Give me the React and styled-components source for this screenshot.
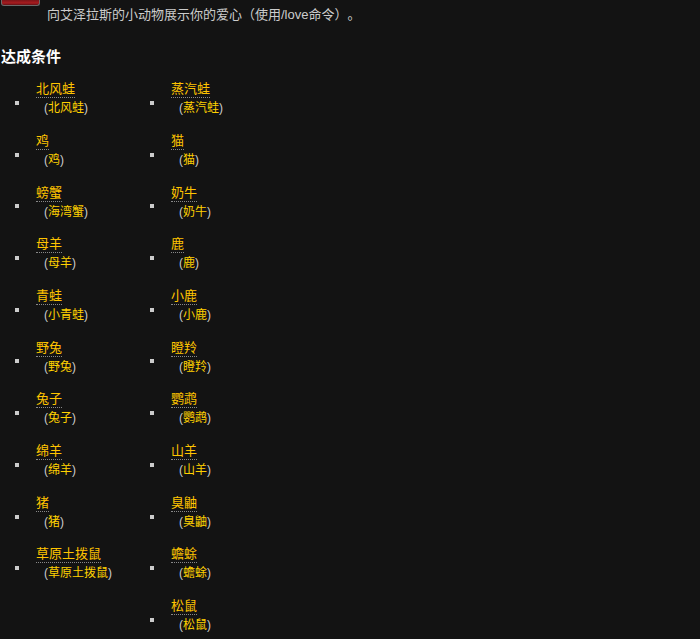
import React from 'react';
import styled, { createGlobalStyle } from 'styled-components';

const GlobalStyle = createGlobalStyle`
  html, body {
    margin: 0;
    padding: 0;
    background-color: #131313;
    overflow: hidden;
  }
  body {
    font-family: "Liberation Sans", "Noto Sans CJK SC", sans-serif;
    font-size: 13px;
    color: #ccc;
  }
`;

const Page = styled.div`
  width: 700px;
  height: 639px;
  overflow: hidden;
`;

const TopIcon = styled.div`
  width: 39px;
  height: 6px;
  margin-left: 1px;
  box-sizing: border-box;
  background: linear-gradient(#7c1418, #a81c20 60%, #5e1014);
  border: 1px solid #6a6a6a;
  border-top: none;
  border-radius: 0 0 3px 3px;
`;

const Description = styled.p`
  margin: 0;
  padding: 1px 0 0 47px;
  line-height: 16px;
  text-spacing-trim: space-all;
`;

const Heading = styled.h3`
  margin: 0;
  padding: 24px 0 0 1px;
  font-size: 15px;
  line-height: 20px;
  font-weight: bold;
  color: #fff;
`;

const Columns = styled.div`
  display: flex;
  padding-top: 14px;
`;

const Column = styled.ul`
  list-style: none;
  margin: 0;
  padding: 0;
  width: 135px;
`;

const Item = styled.li`
  position: relative;
  height: 51.7px;
  padding-left: 36px;

  &::before {
    content: '';
    position: absolute;
    left: 15px;
    top: 20px;
    width: 4px;
    height: 4px;
    background-color: #ccc;
  }
`;

const Name = styled.a`
  display: inline-block;
  margin-top: 0.25px;
  color: #ffc400;
  line-height: 16px;
  border-bottom: 1px dotted #888;
`;

const Criteria = styled.div`
  margin-top: 2px;
  padding-left: 8px;
  font-size: 12px;
  line-height: 16px;
  color: #ccc;
`;

const Sub = styled.span`
  color: #ffd100;
`;

const left = [
  ['北风蛙', '北风蛙'], ['鸡', '鸡'], ['螃蟹', '海湾蟹'], ['母羊', '母羊'], ['青蛙', '小青蛙'],
  ['野兔', '野兔'], ['兔子', '兔子'], ['绵羊', '绵羊'], ['猪', '猪'], ['草原土拨鼠', '草原土拨鼠'],
];

const right = [
  ['蒸汽蛙', '蒸汽蛙'], ['猫', '猫'], ['奶牛', '奶牛'], ['鹿', '鹿'], ['小鹿', '小鹿'], ['瞪羚', '瞪羚'],
  ['鹦鹉', '鹦鹉'], ['山羊', '山羊'], ['臭鼬', '臭鼬'], ['蟾蜍', '蟾蜍'], ['松鼠', '松鼠'],
];

const CritterList = ({ items }) => (
  <Column>
    {items.map(([name, sub]) => (
      <Item key={name}>
        <Name>{name}</Name>
        <Criteria>(<Sub>{sub}</Sub>)</Criteria>
      </Item>
    ))}
  </Column>
);

export default function App() {
  return (
    <Page>
      <GlobalStyle />
      <TopIcon />
      <Description>向艾泽拉斯的小动物展示你的爱心（使用/love命令）。</Description>
      <Heading>达成条件</Heading>
      <Columns>
        <CritterList items={left} />
        <CritterList items={right} />
      </Columns>
    </Page>
  );
}
